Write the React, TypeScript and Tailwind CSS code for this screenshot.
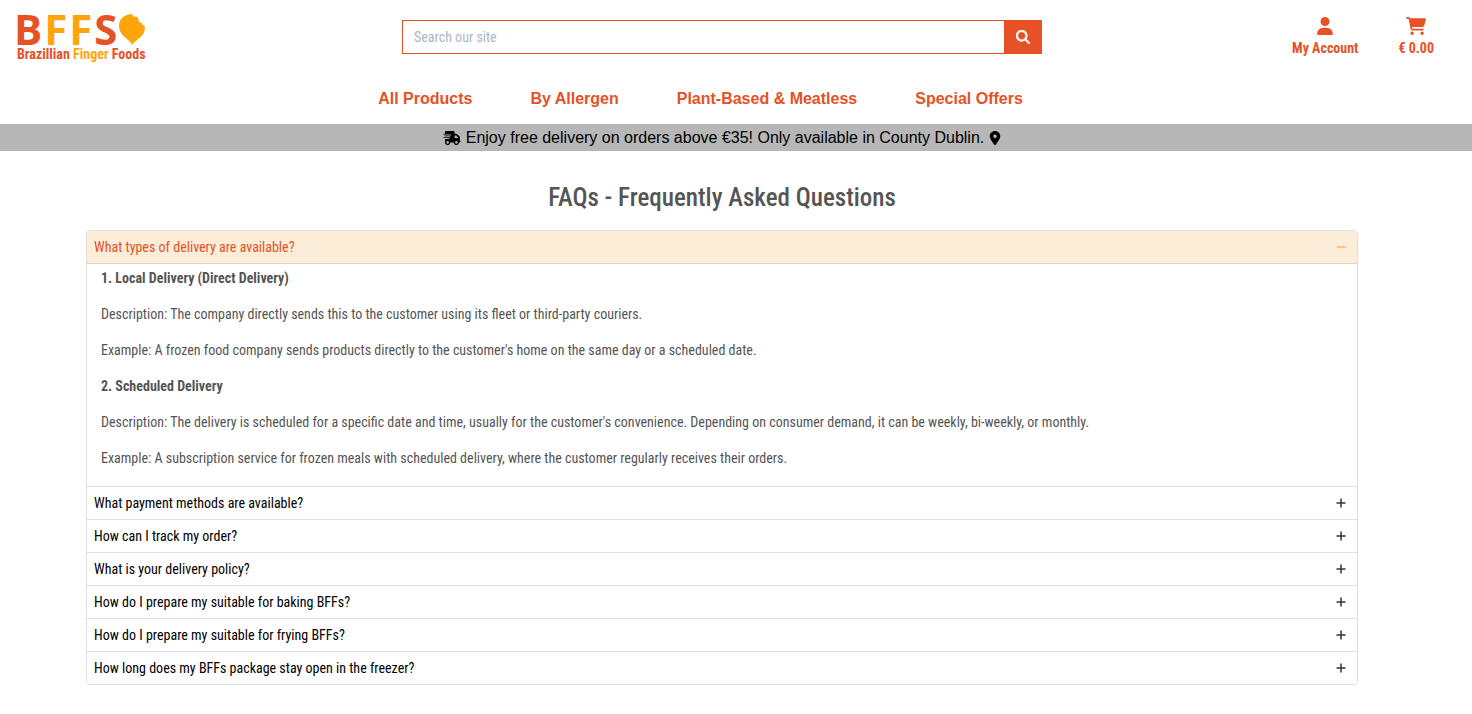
import { useState } from 'react';
import { FaCartShopping, FaLocationDot, FaMagnifyingGlass, FaTruckFast, FaUser } from 'react-icons/fa6';

const navLinks = ['All Products', 'By Allergen', 'Plant-Based & Meatless', 'Special Offers'];

const questions = [
  'What types of delivery are available?',
  'What payment methods are available?',
  'How can I track my order?',
  'What is your delivery policy?',
  'How do I prepare my suitable for baking BFFs?',
  'How do I prepare my suitable for frying BFFs?',
  'How long does my BFFs package stay open in the freezer?',
];

function Logo() {
  return (
    <a href="#home" className="inline-block font-bold">
      <span className="flex h-[35px] items-center gap-[2px] font-['Open_Sans',sans-serif] text-[42px] leading-9">
        <span className="-ml-[3px]">B</span>
        <span className="text-[#ffa50c]">F</span>
        <span className="text-[#ffa50c]">F</span>
        <span>S</span>
        <svg width="26" height="32" viewBox="0 0 26 32" aria-hidden="true">
          <path
            d="M13 32C12 29 8.5 26.500 5 23.500C1.500 20 0 17 0 12.500C0 6.500 5 1.500 12.500 1L14 2.500L15 4L17 3.200L19 4.800L19.500 7.500L21 9.500L22.500 9.700L23.500 12L25.500 12.500C26.500 18 25 21 21 24.500C17 28 14.500 29.500 13 32Z"
            fill="#ffa50c"
          />
        </svg>
      </span>
      <span className="block text-sm leading-4">
        Brazillian <span className="text-[#ffa50c]">Finger</span> Foods
      </span>
    </a>
  );
}

function Header() {
  return (
    <header className="pr-7 text-[#e65125]">
      <div className="grid grid-cols-[1fr_640px_1fr] items-start">
        <div className="h-[66px] pt-[11px] pl-[17px]">
          <Logo />
        </div>
        <form className="mt-5 flex h-[34px] border border-[#e65125]" onSubmit={(e) => e.preventDefault()}>
          <input
            type="search"
            aria-label="Search our site"
            placeholder="Search our site"
            className="min-w-0 flex-1 px-[11px] text-sm outline-none placeholder:text-[#a9b8c4]"
          />
          <button type="submit" aria-label="Search" className="flex w-[37px] items-center justify-center bg-[#e65125] text-white">
            <FaMagnifyingGlass size={14} stroke="currentColor" strokeWidth={20} />
          </button>
        </form>
        <div className="flex justify-end gap-10 pt-[17px] pr-[10px] text-sm leading-5 font-bold">
          <a href="#account" className="flex flex-col items-center gap-[3px]">
            <FaUser size={18} />
            My Account
          </a>
          <a href="#cart" className="flex flex-col items-center gap-[3px]">
            <FaCartShopping size={18} className="w-5" />
            € 0.00
          </a>
        </div>
      </div>
      <nav className="flex justify-center gap-[58px] pt-[21px] pr-[43px] pb-[13px] font-['Liberation_Sans',Arial,sans-serif] text-base font-bold">
        {navLinks.map((label) => (
          <a key={label} href="#shop">{label}</a>
        ))}
      </nav>
    </header>
  );
}

function DeliveryDetails() {
  return (
    <div className="space-y-[15px] px-[14px] pt-1 pb-[17px] leading-[21px] text-[#555]">
      <p className="font-bold">1. Local Delivery (Direct Delivery)</p>
      <p>Description: The company directly sends this to the customer using its fleet or third-party couriers.</p>
      <p>Example: A frozen food company sends products directly to the customer's home on the same day or a scheduled date.</p>
      <p className="font-bold">2. Scheduled Delivery</p>
      <p>Description: The delivery is scheduled for a specific date and time, usually for the customer's convenience. Depending on consumer demand, it can be weekly, bi-weekly, or monthly.</p>
      <p>Example: A subscription service for frozen meals with scheduled delivery, where the customer regularly receives their orders.</p>
    </div>
  );
}

export default function App() {
  const [open, setOpen] = useState(0);
  return (
    <div className="bg-white font-['Roboto_Condensed',Roboto,sans-serif]">
      <Header />
      <div className="flex h-[27px] items-center justify-center gap-[5px] bg-[#b7b7b7] pr-7 font-['Liberation_Sans',Arial,sans-serif] text-base text-black">
        <FaTruckFast size={14} className="w-[18px]" />
        <p>Enjoy free delivery on orders above €35! Only available in County Dublin.</p>
        <FaLocationDot size={14} className="w-[12px]" />
      </div>
      <main className="pt-[31px] pr-[114px] pb-7 pl-[86px]">
        <h1 className="text-center text-[25px] leading-8 font-medium text-[#555]">FAQs - Frequently Asked Questions</h1>
        <div className="mt-4 overflow-hidden rounded-[4px] border border-[#dfdfdf] text-sm">
          {questions.map((question, i) => (
            <section key={question} className="border-b border-[#dfdfdf] last:border-b-0">
              <h2>
                <button
                  type="button"
                  aria-expanded={open === i}
                  onClick={() => setOpen(open === i ? -1 : i)}
                  className={`flex h-8 w-full items-center justify-between pr-[11px] pl-[7px] text-left ${
                    open === i ? 'bg-[#fcedd9] text-[#e65125]' : 'bg-white text-black'
                  }`}
                >
                  {question}
                  <svg width="10" height="10" viewBox="0 0 10 10" className={open === i ? 'text-[#ffb75e]' : 'text-[#333]'}>
                    <path d={open === i ? 'M0.5 5H9.5' : 'M0.5 5H9.5M5 0.5V9.5'} stroke="currentColor" strokeWidth="1.5" />
                  </svg>
                </button>
              </h2>
              {open === i && (
                <div className="border-t border-[#dfd5c6]">
                  {i === 0 ? <DeliveryDetails /> : <p className="px-[14px] py-2 text-[#555]">{question}</p>}
                </div>
              )}
            </section>
          ))}
        </div>
      </main>
    </div>
  );
}
